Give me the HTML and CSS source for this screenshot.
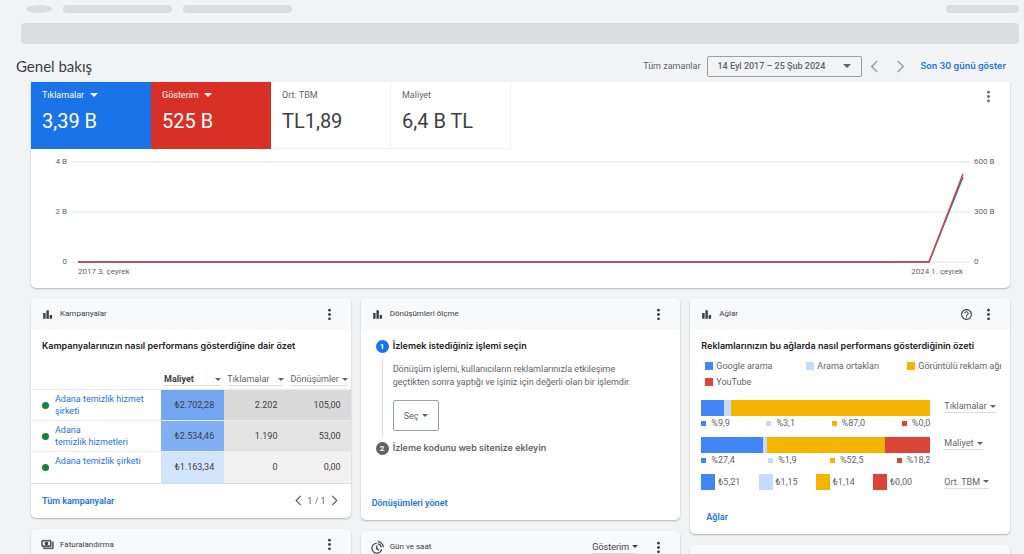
FILE: index.html
```html
<!DOCTYPE html>
<html lang="tr">
<head>
  <meta charset="UTF-8" />
  <meta name="viewport" content="width=device-width, initial-scale=1.0"/>
  <title>Genel bakış</title>
  <link rel="stylesheet" href="styles.css">
</head>
<body>
  <!-- shared icons -->
  <svg class="icon-defs" width="0" height="0" aria-hidden="true">
    <symbol id="dots" viewBox="0 0 24 24"><circle cx="12" cy="4" r="2.6"/><circle cx="12" cy="12" r="2.6"/><circle cx="12" cy="20" r="2.6"/></symbol>
    <symbol id="bars" viewBox="0 0 24 24"><path d="M4 9h4.500v11H4zM16 13h4.500v7H16zM10 4h4.500v16H10z"/></symbol>
    <symbol id="left" viewBox="0 0 24 24"><path d="M17 2L7 12l10 10" fill="none" stroke="currentColor" stroke-width="2.8"/></symbol>
    <symbol id="right" viewBox="0 0 24 24"><path d="M7 2l10 10L7 22" fill="none" stroke="currentColor" stroke-width="2.8"/></symbol>
    <symbol id="help" viewBox="0 0 24 24"><path d="M11 18h2v-2h-2v2zm1-16C6.480 2 2 6.480 2 12s4.480 10 10 10 10-4.480 10-10S17.520 2 12 2zm0 18c-4.410 0-8-3.590-8-8s3.590-8 8-8 8 3.590 8 8-3.590 8-8 8zm0-14c-2.210 0-4 1.790-4 4h2c0-1.100.9-2 2-2s2 .9 2 2c0 2-3 1.750-3 5h2c0-2.250 3-2.500 3-5 0-2.210-1.790-4-4-4z"/></symbol>
  </svg>

  <div class="topbar">
    <span class="ghost ghost-logo"></span>
    <span class="ghost"></span>
    <span class="ghost"></span>
    <span class="ghost ghost-right"></span>
  </div>
  <div class="ghost-bar"></div>

  <header class="page-head">
    <h1>Genel bakış</h1>
    <label for="range">Tüm zamanlar</label>
    <span class="drop drop-box">
      <select id="range"><option>14 Eyl 2017 – 25 Şub 2024</option></select>
    </span>
    <button class="nav" aria-label="Önceki"><svg><use href="#left"/></svg></button>
    <button class="nav" aria-label="Sonraki"><svg><use href="#right"/></svg></button>
    <a class="link" href="#">Son 30 günü göster</a>
  </header>

  <main>
    <section class="summary">
      <div class="scores">
        <div class="score blue">
          <span class="drop"><select aria-label="Birinci metrik"><option>Tıklamalar</option></select></span>
          <strong>3,39 B</strong>
        </div>
        <div class="score red">
          <span class="drop"><select aria-label="İkinci metrik"><option>Gösterim</option></select></span>
          <strong>525 B</strong>
        </div>
        <div class="score">
          <span>Ort. TBM</span>
          <strong>TL1,89</strong>
        </div>
        <div class="score">
          <span>Maliyet</span>
          <strong>6,4 B TL</strong>
        </div>
        <button class="menu" aria-label="Menü"><svg><use href="#dots"/></svg></button>
      </div>

      <div class="chart">
        <div class="axis axis-left"><span>4 B</span><span>2 B</span><span>0</span></div>
        <div class="plot">
          <svg viewBox="0 0 896 100" preserveAspectRatio="none">
            <path class="grid" d="M0 0H896M0 50H896M0 100H896"/>
            <path class="clicks" d="M6 100H856L890 15"/>
            <path class="views" d="M6 100H856L890 12"/>
          </svg>
          <div class="dates"><span>2017 3. çeyrek</span><span>2024 1. çeyrek</span></div>
        </div>
        <div class="axis"><span>600 B</span><span>300 B</span><span>0</span></div>
      </div>
    </section>

    <div class="columns">
      <div class="column">
        <section class="card">
          <div class="card-head">
            <svg><use href="#bars"/></svg>
            <h2>Kampanyalar</h2>
            <button class="menu" aria-label="Menü"><svg><use href="#dots"/></svg></button>
          </div>
          <h3>Kampanyalarınızın nasıl performans gösterdiğine dair özet</h3>
          <table>
            <thead>
              <tr>
                <th class="name"></th>
                <th><span class="drop line"><select class="bold" aria-label="Sütun 1"><option>Maliyet</option></select></span></th>
                <th><span class="drop line"><select aria-label="Sütun 2"><option>Tıklamalar</option></select></span></th>
                <th><span class="drop line"><select aria-label="Sütun 3"><option>Dönüşümler</option></select></span></th>
              </tr>
            </thead>
            <tbody>
              <tr>
                <td><div class="campaign"><i></i><a href="#">Adana temizlik hizmet<br>şirketi</a></div></td>
                <td class="b3">₺2.702,28</td>
                <td class="g3">2.202</td>
                <td class="g3">105,00</td>
              </tr>
              <tr>
                <td><div class="campaign"><i></i><a href="#">Adana<br>temizlik hizmetleri</a></div></td>
                <td class="b2">₺2.534,46</td>
                <td class="g2">1.190</td>
                <td class="g2">53,00</td>
              </tr>
              <tr>
                <td><div class="campaign"><i></i><a href="#">Adana temizlik şirketi<br>&nbsp;</a></div></td>
                <td class="b1">₺1.163,34</td>
                <td class="g1">0</td>
                <td class="g1">0,00</td>
              </tr>
            </tbody>
          </table>
          <div class="card-foot">
            <a class="link" href="#">Tüm kampanyalar</a>
            <div class="pager">
              <button aria-label="Önceki sayfa"><svg><use href="#left"/></svg></button>
              <span>1 / 1</span>
              <button aria-label="Sonraki sayfa"><svg><use href="#right"/></svg></button>
            </div>
          </div>
        </section>

        <section class="card">
          <div class="card-head">
            <svg viewBox="0 0 24 24"><path d="M19 14V6c0-1.100-.9-2-2-2H3c-1.100 0-2 .9-2 2v8c0 1.100.9 2 2 2h14c1.100 0 2-.9 2-2zm-2 0H3V6h14v8zm-7-7c-1.660 0-3 1.340-3 3s1.340 3 3 3 3-1.340 3-3-1.340-3-3-3zm13 0v11c0 1.100-.9 2-2 2H4v-2h17V7h2z" stroke="currentColor" stroke-width=".6"/></svg>
            <h2>Faturalandırma</h2>
            <button class="menu" aria-label="Menü"><svg><use href="#dots"/></svg></button>
          </div>
          <div class="card-body"></div>
        </section>
      </div>

      <div class="column">
        <section class="card">
          <div class="card-head">
            <svg><use href="#bars"/></svg>
            <h2>Dönüşümleri ölçme</h2>
            <button class="menu" aria-label="Menü"><svg><use href="#dots"/></svg></button>
          </div>
          <ol class="steps">
            <li class="step active">
              <div class="mark"><b>1</b></div>
              <div class="step-text">
                <h4>İzlemek istediğiniz işlemi seçin</h4>
                <p>Dönüşüm işlemi, kullanıcıların reklamlarınızla etkileşime geçtikten sonra yaptığı ve işiniz için değerli olan bir işlemdir.</p>
                <span class="drop drop-box tall"><select aria-label="İşlem"><option>Seç</option></select></span>
              </div>
            </li>
            <li class="step">
              <div class="mark"><b>2</b></div>
              <div class="step-text"><h4>İzleme kodunu web sitenize ekleyin</h4></div>
            </li>
          </ol>
          <div class="card-foot">
            <a class="link" href="#">Dönüşümleri yönet</a>
          </div>
        </section>

        <section class="card">
          <div class="card-head">
            <svg class="outline" viewBox="0 0 24 24"><path d="M10.500 4.500a9 9 0 1 0 9 11M10.500 8.500v5.500l4.500 3M12.500 1.200a11 11 0 0 1 10.300 10.300M12.500 5.200a7 7 0 0 1 6.300 6.300"/></svg>
            <h2>Gün ve saat</h2>
            <span class="drop line"><select aria-label="Metrik"><option>Gösterim</option></select></span>
            <button class="menu" aria-label="Menü"><svg><use href="#dots"/></svg></button>
          </div>
          <div class="card-body"></div>
        </section>
      </div>

      <div class="column">
        <section class="card">
          <div class="card-head">
            <svg><use href="#bars"/></svg>
            <h2>Ağlar</h2>
            <button class="help" aria-label="Yardım"><svg><use href="#help"/></svg></button>
            <button class="menu" aria-label="Menü"><svg><use href="#dots"/></svg></button>
          </div>
          <h3>Reklamlarınızın bu ağlarda nasıl performans gösterdiğinin özeti</h3>
          <ul class="legend">
            <li class="google">Google arama</li>
            <li class="partner">Arama ortakları</li>
            <li class="display">Görüntülü reklam ağı</li>
            <li class="youtube">YouTube</li>
          </ul>

          <div class="network">
            <div class="network-data">
              <div class="stack">
                <span class="google" style="flex-grow: 9.9"></span>
                <span class="partner" style="flex-grow: 2.8"></span>
                <span class="display" style="flex-grow: 87"></span>
              </div>
              <ul class="shares">
                <li class="google">%9,9</li>
                <li class="partner">%3,1</li>
                <li class="display">%87,0</li>
                <li class="youtube">%0,0</li>
              </ul>
            </div>
            <span class="drop line"><select aria-label="Ağ metriği 1"><option>Tıklamalar</option></select></span>
          </div>

          <div class="network">
            <div class="network-data">
              <div class="stack">
                <span class="google" style="flex-grow: 26.9"></span>
                <span class="partner" style="flex-grow: 1.8"></span>
                <span class="display" style="flex-grow: 51.5"></span>
                <span class="youtube" style="flex-grow: 19.8"></span>
              </div>
              <ul class="shares">
                <li class="google">%27,4</li>
                <li class="partner">%1,9</li>
                <li class="display">%52,5</li>
                <li class="youtube">%18,2</li>
              </ul>
            </div>
            <span class="drop line"><select aria-label="Ağ metriği 2"><option>Maliyet</option></select></span>
          </div>

          <div class="network centered">
            <ul class="network-data prices">
              <li class="google">₺5,21</li>
              <li class="partner">₺1,15</li>
              <li class="display">₺1,14</li>
              <li class="youtube">₺0,00</li>
            </ul>
            <span class="drop line"><select aria-label="Ağ metriği 3"><option>Ort. TBM</option></select></span>
          </div>

          <div class="card-foot indent">
            <a class="link" href="#">Ağlar</a>
          </div>
        </section>

        <section class="card">
          <div class="card-head"></div>
          <div class="card-body"></div>
        </section>
      </div>
    </div>
  </main>
</body>
</html>
```

FILE: styles.css
```css
* {
  margin: 0;
  padding: 0;
  box-sizing: border-box;
}

body {
  height: 100vh;
  overflow: hidden;
  background-color: #f1f3f4;
  font-family: Roboto, "Liberation Sans", sans-serif;
  font-size: 9px;
  line-height: 12px;
  color: #5f6368;
}

ul,
ol {
  list-style: none;
}

a {
  color: #1a73e8;
  text-decoration: none;
}

button {
  display: flex;
  align-items: center;
  justify-content: center;
  border: none;
  background: none;
  color: inherit;
  cursor: pointer;
}

svg {
  display: block;
  width: 13px;
  height: 13px;
  fill: currentColor;
}

.icon-defs {
  position: absolute;
  width: 0;
  height: 0;
}

.outline {
  fill: none;
  stroke: currentColor;
  stroke-width: 2.4;
}

.link {
  font-weight: 600;
}

/* dropdowns */
.drop {
  display: inline-grid;
  align-items: center;
  color: inherit;
}

.drop select {
  grid-area: 1 / 1;
  width: 100%;
  padding-right: 9px;
  appearance: none;
  border: none;
  outline: none;
  background: none;
  font: inherit;
  color: inherit;
}

.drop select.bold {
  font-weight: 700;
  color: #3c4043;
}

.drop::after {
  content: "";
  grid-area: 1 / 1;
  justify-self: end;
  border: 3px solid transparent;
  border-top-color: currentColor;
  border-bottom: none;
  pointer-events: none;
}

.drop.line {
  border-bottom: 1px solid #dadce0;
}

.drop-box {
  height: 21px;
  padding: 0 10px;
  border: 1px solid #9aa0a6;
  border-radius: 2px;
}

/* top placeholders */
.topbar {
  display: flex;
  gap: 11px;
  padding: 5px 5px 0 26px;
}

.ghost {
  width: 109px;
  height: 8px;
  border-radius: 4px;
  background-color: #dadce0;
}

.ghost-logo {
  width: 26px;
  border-radius: 50%;
}

.ghost-right {
  width: 73px;
  margin-left: auto;
}

.ghost-bar {
  height: 21px;
  margin: 10px 5px 0 21px;
  border-radius: 4px;
  background-color: #dadce0;
}

.page-head {
  display: flex;
  align-items: center;
  height: 38px;
  padding: 6px 18px 0 16px;
}

h1 {
  margin-right: auto;
  font-family: Lato, sans-serif;
  font-size: 15px;
  font-weight: 400;
  color: #3c4043;
}

.page-head label {
  margin-right: 6px;
}

.page-head .drop-box {
  width: 155px;
  font-weight: 500;
}

.page-head .drop::after,
.score .drop::after {
  border-width: 4px 4px 0;
}

.nav {
  width: 26px;
  color: #9aa0a6;
}

.page-head .link {
  margin-left: 7px;
  font-family: Inter, sans-serif;
}

main {
  padding: 0 14px 0 31px;
}

.summary,
.card {
  background-color: #fff;
  box-shadow: 0 1px 2px rgba(60, 64, 67, 0.35);
}

.summary {
  height: 206px;
  margin-bottom: 10px;
  border-radius: 0 0 5px 5px;
}

.scores {
  display: flex;
}

.score {
  display: flex;
  flex-direction: column;
  align-items: flex-start;
  gap: 8px;
  width: 120px;
  height: 67px;
  padding: 7px 11px;
  border: solid #eceef0;
  border-width: 0 1px 1px 0;
}

.score .drop select {
  padding-right: 13px;
}

.score strong {
  font-size: 20px;
  font-weight: 400;
  line-height: 24px;
  color: #3c4043;
}

.blue,
.red {
  border: none;
  color: #fff;
}

.blue {
  background-color: #1a73e8;
}

.red {
  background-color: #d93025;
}

.blue strong,
.red strong {
  color: #fff;
}

.scores .menu {
  margin: 8px 15px auto auto;
}

.chart {
  display: flex;
  gap: 5px;
  padding: 7px 14px 0;
  font-size: 8px;
}

.axis {
  display: flex;
  flex-direction: column;
  justify-content: space-between;
  width: 22px;
  height: 112px;
}

.axis-left {
  text-align: right;
}

.plot {
  flex: 1;
  padding-top: 6px;
}

.plot svg {
  width: 100%;
  height: 100px;
  overflow: visible;
  fill: none;
}

.plot path {
  vector-effect: non-scaling-stroke;
  stroke-width: 1.5;
}

.plot .grid {
  stroke: #e8eaed;
}

.plot .clicks {
  stroke: #1a73e8;
}

.plot .views {
  stroke: #db4437;
}

.dates {
  display: flex;
  justify-content: space-between;
  padding: 4px 6px 0;
}

/* cards */
.columns {
  display: grid;
  grid-template-columns: repeat(3, 1fr);
  gap: 10px;
}

.column {
  display: flex;
  flex-direction: column;
  gap: 11px;
}

.card {
  border-radius: 5px;
  overflow: hidden;
}

.card-head {
  display: flex;
  align-items: center;
  height: 32px;
  padding: 0 15px 0 10px;
  background-color: #f8f9fa;
  color: #3c4043;
}

.card-body {
  height: 120px;
}

h2 {
  margin: 0 auto 0 6px;
  font-size: 8px;
  font-weight: 400;
}

.card-head .drop {
  margin-right: 14px;
}

.help {
  margin-right: 9px;
}

h3,
h4 {
  font-family: Inter, sans-serif;
  font-size: 9px;
  font-weight: 600;
  color: #202124;
}

h3 {
  padding: 10px 11px 8px;
}

table {
  width: 100%;
  border-collapse: collapse;
  table-layout: fixed;
}

th {
  padding: 13px 3px 3px;
  font-weight: 400;
}

th.name {
  width: 130px;
}

th .drop {
  display: grid;
}

th .drop select {
  padding-right: 7px;
}

td {
  height: 31px;
  padding-right: 10px;
  border-top: 1px solid #e8eaed;
  text-align: right;
  font-size: 9px;
  color: #3c4043;
}

td:first-child {
  padding-right: 0;
  text-align: left;
}

.campaign {
  display: flex;
  align-items: center;
  gap: 6px;
  padding-left: 11px;
}

.campaign i {
  width: 7px;
  height: 7px;
  border-radius: 50%;
  background-color: #188038;
}

.b3 { background-color: #73a5f0; }
.b2 { background-color: #80aff4; }
.b1 { background-color: #d2e3fc; }
.g3 { background-color: #dadada; }
.g2 { background-color: #e3e3e3; }
.g1 { background-color: #f1f1f1; }

.card-foot {
  display: flex;
  align-items: center;
  justify-content: space-between;
  height: 35px;
  padding: 0 11px;
}

table + .card-foot {
  border-top: 1px solid #dadce0;
}

.card-foot.indent {
  height: 44px;
  padding: 10px 16px 0;
}

.pager {
  display: flex;
  align-items: center;
  gap: 3px;
}

.pager svg {
  width: 11px;
  height: 11px;
}

/* conversion steps */
.steps {
  height: 155px;
  padding: 10px 15px 0;
}

.step {
  display: flex;
  gap: 4px;
}

.mark {
  display: flex;
  flex-direction: column;
  align-items: center;
  width: 13px;
}

.mark b {
  width: 13px;
  height: 13px;
  border-radius: 50%;
  background-color: #5f6368;
  font-size: 8px;
  line-height: 13px;
  text-align: center;
  color: #fff;
}

.active .mark b {
  background-color: #1a73e8;
}

.active .mark::after {
  content: "";
  flex: 1;
  margin: 5px 0;
  border-left: 1px solid #dadce0;
}

h4 {
  color: #5f6368;
}

.active h4 {
  color: #202124;
}

.active .step-text {
  padding-bottom: 11px;
}

.step p {
  padding: 11px 18px 11px 0;
  line-height: 13px;
}

.drop-box.tall {
  height: 31px;
}

/* networks */
.legend {
  display: grid;
  grid-template-columns: repeat(3, 101px);
  gap: 4px 0;
  padding: 0 0 12px 15px;
}

.legend li,
.shares li,
.prices li {
  display: flex;
  align-items: center;
  gap: 3px;
  white-space: nowrap;
}

.legend li::before,
.shares li::before,
.prices li::before {
  content: "";
  width: 8px;
  height: 8px;
}

.google,
.google::before { --c: #4285f4; }
.partner,
.partner::before { --c: #c6dafc; }
.display,
.display::before { --c: #f4b400; }
.youtube,
.youtube::before { --c: #db4437; }

li::before,
.stack span {
  background-color: var(--c);
}

.network {
  display: grid;
  grid-template-columns: 229px auto;
  justify-content: start;
  align-items: start;
  gap: 14px;
  padding-left: 11px;
}

.network.centered {
  align-items: center;
}

.stack {
  display: flex;
  height: 16px;
}

.shares {
  display: flex;
  justify-content: space-between;
  padding: 1px 0 8px;
}

.shares li {
  gap: 5px;
}

.shares li::before {
  width: 5px;
  height: 5px;
}

.prices {
  display: grid;
  grid-template-columns: repeat(4, 1fr);
}

.prices li::before {
  width: 14px;
  height: 16px;
}
```
